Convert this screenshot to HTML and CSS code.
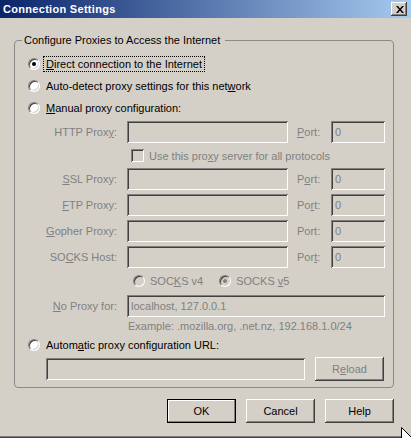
FILE: index.html
```html
<!DOCTYPE html>
<html>
<head>
<meta charset="utf-8">
<title>Connection Settings</title>
<link rel="stylesheet" href="styles.css">
</head>
<body>
<div class="window">
  <div class="titlebar">
    <span class="title">Connection Settings</span>
    <span class="close">
      <svg width="8" height="7" viewBox="0 0 8 7"><path d="M0 0h2l2 2.5 2-2.5h2l-3 3.5 3 3.5h-2l-2-2.5-2 2.5h-2l3-3.5z" fill="#000"/></svg>
    </span>
  </div>

  <fieldset class="group">
    <legend>Configure Proxies to Access the Internet</legend>
    <div class="inner">
      <div class="opt"><span class="radio checked"></span><span class="lbl focus"><u>D</u>irect connection to the Internet</span></div>
      <div class="opt"><span class="radio"></span><span class="lbl">Auto-detect proxy settings for this net<u>w</u>ork</span></div>
      <div class="opt"><span class="radio"></span><span class="lbl"><u>M</u>anual proxy configuration:</span></div>

      <div class="prow first">
        <span class="plabel">HTTP Prox<u>y</u>:</span>
        <span class="field host"></span>
        <span class="portlabel"><u>P</u>ort:</span>
        <span class="field port">0</span>
      </div>
      <div class="crow"><span class="check"></span><span class="clbl">Use this pro<u>x</u>y server for all protocols</span></div>
      <div class="prow">
        <span class="plabel"><u>S</u>SL Proxy:</span>
        <span class="field host"></span>
        <span class="portlabel">P<u>o</u>rt:</span>
        <span class="field port">0</span>
      </div>
      <div class="prow">
        <span class="plabel"><u>F</u>TP Proxy:</span>
        <span class="field host"></span>
        <span class="portlabel">Po<u>r</u>t:</span>
        <span class="field port">0</span>
      </div>
      <div class="prow">
        <span class="plabel"><u>G</u>opher Proxy:</span>
        <span class="field host"></span>
        <span class="portlabel">Port:</span>
        <span class="field port">0</span>
      </div>
      <div class="prow">
        <span class="plabel">SO<u>C</u>KS Host:</span>
        <span class="field host"></span>
        <span class="portlabel">Por<u>t</u>:</span>
        <span class="field port">0</span>
      </div>
      <div class="srow">
        <span class="radio dis"></span><span class="slbl">SOC<u>K</u>S v4</span>
        <span class="radio dis checked v5"></span><span class="slbl">SOCKS <u>v</u>5</span>
      </div>
      <div class="prow noproxy">
        <span class="plabel"><u>N</u>o Proxy for:</span>
        <span class="field wide">localhost, 127.0.0.1</span>
      </div>
      <div class="example">Example: .mozilla.org, .net.nz, 192.168.1.0/24</div>
      <div class="opt auto"><span class="radio"></span><span class="lbl">Autom<u>a</u>tic proxy configuration URL:</span></div>
      <div class="urow">
        <span class="field url"></span>
        <button class="btn reload">R<u>e</u>load</button>
      </div>
    </div>
  </fieldset>

  <div class="buttons">
    <button class="btn default">OK</button>
    <button class="btn">Cancel</button>
    <button class="btn">Help</button>
  </div>
</div>
<svg class="cursor" width="12" height="19" viewBox="0 0 12 19"><path d="M0.5 0.5V16.5L4.5 12.5L7.5 18.5L9.5 17.5L6.5 11.5H11.5Z" fill="#fff" stroke="#000" stroke-width="1"/></svg>
</body>
</html>
```

FILE: styles.css
```css
* { box-sizing: border-box; }
html, body { margin: 0; padding: 0; }
body {
  width: 411px;
  height: 438px;
  overflow: hidden;
  position: relative;
  background: #d4d0c8;
  font: 11px/14px "Liberation Sans", Arial, sans-serif;
  color: #000;
}
u { text-decoration: underline; text-underline-offset: 1px; }

.window {
  height: 438px;
  display: flex;
  flex-direction: column;
  box-shadow: inset 0 -1px #404040, inset 0 -2px #808080;
}

.titlebar {
  height: 18px;
  flex: none;
  display: flex;
  align-items: center;
  padding: 0 4px 0 3px;
  background: linear-gradient(to right, #0a246a, #a6caf0);
}
.title {
  color: #fff;
  font-weight: bold;
  letter-spacing: 0.3px;
  line-height: 18px;
}
.close {
  margin-left: auto;
  width: 16px;
  height: 14px;
  display: flex;
  align-items: center;
  justify-content: center;
  padding-left: 1px;
  background: #d4d0c8;
  box-shadow: inset -1px -1px #404040, inset 1px 1px #fff, inset -2px -2px #808080;
}
.close svg { display: block; }

.group {
  margin: 15px 0 0 14px;
  width: 380px;
  min-width: 0;
  border: 1px solid #8a8a8a;
  border-radius: 4px;
  padding: 8px 8px 6px 7px;
}
.group legend {
  padding: 0 5px 0 2px;
  line-height: 15px;
}
.inner {
  padding-left: 6px;
  display: flex;
  flex-direction: column;
}

.opt {
  display: flex;
  align-items: center;
  height: 16px;
}
.opt + .opt { margin-top: 6px; }

.radio {
  position: relative;
  flex: none;
  width: 12px;
  height: 12px;
  border-radius: 50%;
  background: #fff;
  border: 1px solid;
  border-color: #808080 #fff #fff #808080;
  box-shadow: inset 1px 1px #404040, inset -1px -1px #d4d0c8;
}
.radio.checked::after {
  content: "";
  position: absolute;
  left: 3px;
  top: 3px;
  width: 4px;
  height: 4px;
  border-radius: 50%;
  background: #000;
}
.radio.dis { background: #d4d0c8; }
.radio.dis.checked::after { background: #808080; }

.lbl {
  margin-left: 3px;
  padding: 0 2px;
  border: 1px dotted transparent;
  line-height: 14px;
}
.lbl.focus { border-color: #000; }

.prow {
  display: flex;
  align-items: center;
  height: 22px;
  margin-top: 4px;
  color: #808080;
}
.prow.first { margin-top: 5px; }
.plabel { width: 89px; text-align: right; }
.field {
  height: 22px;
  margin-left: 10px;
  padding: 0 4px;
  line-height: 22px;
  color: #808080;
  background: #d4d0c8;
  box-shadow: inset 1px 1px #808080, inset -1px -1px #fff, inset 2px 2px #404040, inset -2px -2px #d4d0c8;
  white-space: nowrap;
}
.field.host { width: 161px; }
.portlabel { margin-left: 9px; width: 24px; }
.field.port { width: 54px; }
.field.wide { width: 258px; }

.crow {
  display: flex;
  align-items: center;
  height: 13px;
  margin: 6px 0 2px 103px;
  color: #808080;
}
.check {
  flex: none;
  width: 13px;
  height: 13px;
  background: #d4d0c8;
  box-shadow: inset 1px 1px #808080, inset -1px -1px #fff, inset 2px 2px #404040, inset -2px -2px #d4d0c8;
}
.clbl { margin-left: 5px; }

.srow {
  display: flex;
  align-items: center;
  height: 14px;
  margin: 6px 0 0 105px;
  color: #808080;
}
.slbl { margin-left: 5px; }
.radio.v5 { margin-left: 16px; }

.noproxy { margin-top: 7px; }

.example {
  margin-top: 2px;
  padding-left: 100px;
  line-height: 14px;
  color: #808080;
}
.opt.auto { margin-top: 4px; }

.urow {
  display: flex;
  align-items: center;
  height: 24px;
  margin-top: 4px;
  padding-left: 18px;
}
.field.url { width: 259px; margin-left: 0; }

.btn {
  width: 69px;
  height: 24px;
  padding: 0;
  border: 0;
  margin: 0;
  font: inherit;
  color: #000;
  background: #d4d0c8;
  display: flex;
  align-items: center;
  justify-content: center;
  box-shadow: inset -1px -1px #404040, inset 1px 1px #fff, inset -2px -2px #808080;
}
.btn.default {
  box-shadow: inset 0 0 0 1px #000, inset -2px -2px #808080, inset 2px 2px #fff;
}
.btn.reload { margin-left: 10px; color: #808080; }

.buttons {
  display: flex;
  justify-content: flex-end;
  gap: 10px;
  margin-top: 11px;
  padding-right: 17px;
}

.cursor {
  position: absolute;
  left: 401px;
  top: 427px;
}
```
